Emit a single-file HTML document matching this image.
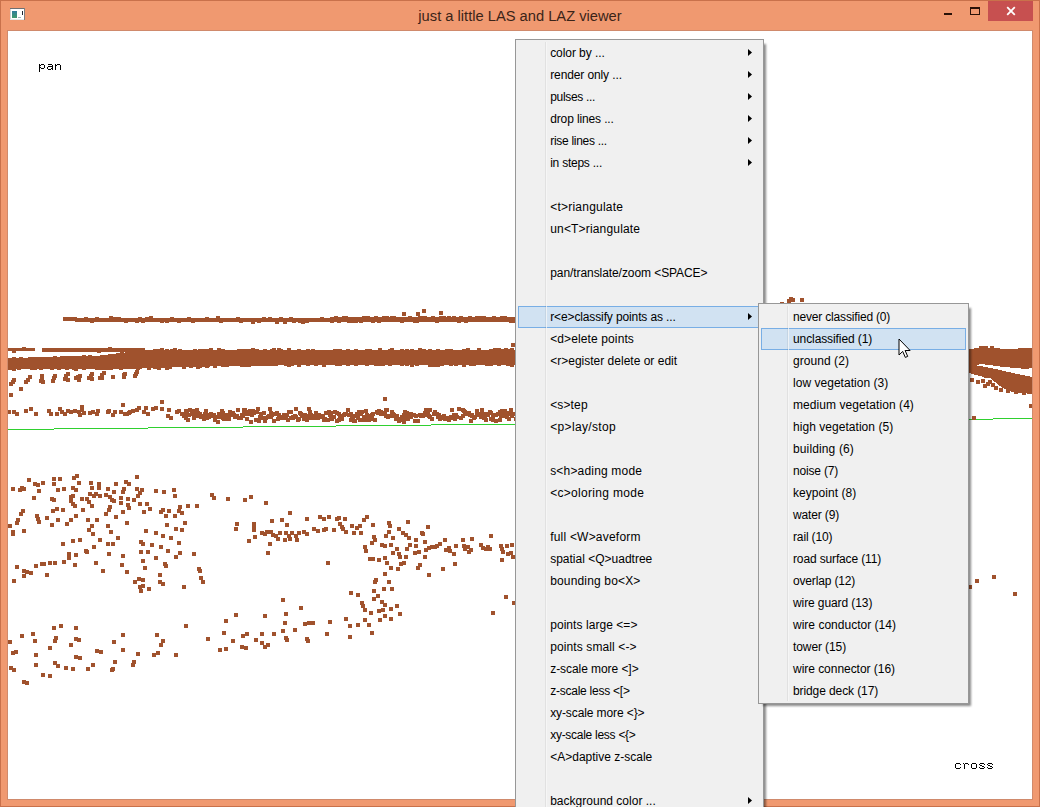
<!DOCTYPE html>
<html><head><meta charset="utf-8"><title>just a little LAS and LAZ viewer</title>
<style>
html,body{margin:0;padding:0;overflow:hidden}
body{width:1040px;height:807px;overflow:hidden;position:relative;background:#F09970;font-family:"Liberation Sans",sans-serif;font-size:12px;color:#000}
.frame{position:absolute;left:0;top:0;width:1038px;height:805px;border:1px solid #C9714B}
.canvas{position:absolute;left:7px;top:30px;width:1024px;height:768px;background:#fff;overflow:hidden;border:1px solid #D08A6C}
.gl{position:absolute;left:0;top:0}
.title{position:absolute;left:0;top:6px;width:1040px;text-align:center;font-size:14.7px;line-height:20px;color:#3b2418}
.icon{position:absolute;left:10px;top:8px;width:15px;height:12px}
.btn{position:absolute}
.close{position:absolute;left:988px;top:1px;width:45px;height:20px;background:#C75050}
.menu{position:absolute;background:#F0F0F0;border:1px solid #979797;box-sizing:border-box}
.menu .gut{position:absolute;top:2px;bottom:2px;width:1px;background:rgba(0,0,0,.058);border-right:1px solid rgba(255,255,255,.7);z-index:1}
.it{position:relative;height:22px;line-height:22px;white-space:pre}
.it span{position:absolute;top:0}
#m1{left:515px;top:39px;width:249px;height:790px;padding:2px 0}
#m1 .gut{left:29px}
#m1 .it span{left:34.2px}
#m1 .hl::before{content:"";position:absolute;left:2px;right:3px;top:0;height:20px;background:#D1E2F2;border:1px solid #78AEE5}
#m2{left:758px;top:303px;width:211px;height:401px;padding:2px 0}
#m2 .gut{left:28px}
#m2 .it span{left:34px}
#m2 .hl::before{content:"";position:absolute;left:2px;right:2px;top:0;height:20px;background:#D1E2F2;border:1px solid #78AEE5}
.ar{position:absolute;left:232px;top:7px;width:4px;height:7px;background:#000;clip-path:polygon(0 0,100% 50%,0 100%)}
.sh{position:absolute;background:rgba(0,0,0,.46);filter:blur(.8px)}
.cur{position:absolute;left:897.5px;top:337.5px}
</style></head><body>
<div class="frame"></div>
<div class="canvas"></div>
<div style="position:absolute;left:8px;top:31px;width:1024px;height:768px;overflow:hidden"><svg class="gl" width="1024" height="768" viewBox="8 31 1024 768" shape-rendering="crispEdges">
<line x1="8" y1="429.5" x2="1032" y2="418.6" stroke="#2fd02f" stroke-width="1"/>
<g fill="#A0522D">
<rect x="75" y="318" width="255" height="4"/>
<rect x="330" y="317" width="186" height="5"/>
<rect x="63" y="317" width="14" height="4"/>
<rect x="8" y="348" width="27" height="3"/>
<rect x="42" y="348" width="103" height="4"/>
<polygon points="8.0,358.0 12.0,357.9 16.0,357.8 20.0,357.7 24.0,357.6 28.0,357.5 32.0,357.3 36.0,357.2 40.0,357.1 44.0,357.0 48.0,356.9 52.0,356.8 56.0,356.7 60.0,356.6 64.0,356.5 68.0,356.4 72.0,356.3 76.0,356.2 80.0,356.0 84.0,355.9 88.0,355.8 92.0,355.7 96.0,355.6 100.0,355.5 104.0,355.0 108.0,354.5 112.0,354.0 116.0,353.5 120.0,353.1 124.0,352.6 128.0,352.1 132.0,351.6 136.0,351.1 140.0,350.6 144.0,350.1 148.0,350.0 152.0,350.0 156.0,350.0 160.0,350.0 164.0,350.0 168.0,350.0 172.0,350.0 176.0,350.0 180.0,350.0 184.0,350.0 188.0,350.0 192.0,350.0 196.0,350.0 200.0,350.0 204.0,350.0 208.0,350.0 212.0,350.0 216.0,350.0 220.0,350.0 224.0,350.0 228.0,350.0 232.0,350.0 236.0,350.0 240.0,350.0 244.0,350.0 248.0,350.0 252.0,350.0 256.0,350.0 260.0,350.0 264.0,350.0 268.0,350.0 272.0,350.0 276.0,350.0 280.0,350.0 284.0,350.0 288.0,350.0 292.0,350.0 296.0,350.0 300.0,350.0 304.0,350.0 308.0,350.0 312.0,350.0 316.0,350.0 320.0,350.0 324.0,350.0 328.0,350.0 332.0,350.0 336.0,350.0 340.0,350.0 344.0,350.0 348.0,350.0 352.0,350.0 356.0,350.0 360.0,350.0 364.0,350.0 368.0,350.0 372.0,350.0 376.0,350.0 380.0,350.0 384.0,350.0 388.0,350.0 392.0,350.0 396.0,350.0 400.0,350.0 404.0,350.0 408.0,350.0 412.0,350.0 416.0,350.0 420.0,350.0 424.0,350.0 428.0,350.0 432.0,350.0 436.0,350.0 440.0,350.0 444.0,350.0 448.0,350.0 452.0,350.0 456.0,350.0 460.0,350.0 464.0,350.0 468.0,350.0 472.0,350.0 476.0,350.0 480.0,350.0 484.0,350.0 488.0,350.0 492.0,350.0 496.0,350.0 500.0,350.0 504.0,350.0 508.0,350.0 512.0,350.0 516.0,350.0 516.0,364.5 512.0,365.0 508.0,365.0 504.0,365.0 500.0,365.0 496.0,365.0 492.0,365.0 488.0,365.1 484.0,365.1 480.0,365.1 476.0,365.1 472.0,365.1 468.0,365.1 464.0,365.1 460.0,365.1 456.0,365.1 452.0,365.1 448.0,365.1 444.0,365.1 440.0,365.1 436.0,365.1 432.0,365.2 428.0,365.2 424.0,365.2 420.0,365.2 416.0,365.2 412.0,365.2 408.0,365.2 404.0,365.2 400.0,365.2 396.0,365.2 392.0,365.2 388.0,365.2 384.0,365.2 380.0,365.3 376.0,365.3 372.0,365.3 368.0,365.3 364.0,365.3 360.0,365.3 356.0,365.3 352.0,365.3 348.0,365.3 344.0,365.3 340.0,365.3 336.0,365.3 332.0,365.3 328.0,365.4 324.0,365.4 320.0,365.4 316.0,365.4 312.0,365.4 308.0,365.4 304.0,365.4 300.0,365.4 296.0,365.4 292.0,365.4 288.0,365.4 284.0,365.4 280.0,365.4 276.0,365.5 272.0,365.5 268.0,365.5 264.0,365.5 260.0,365.5 256.0,365.5 252.0,365.5 248.0,365.6 244.0,365.6 240.0,365.8 236.0,365.9 232.0,365.9 228.0,366.1 224.0,366.1 220.0,366.2 216.0,366.4 212.0,366.4 208.0,366.6 204.0,366.6 200.0,366.8 196.0,366.9 192.0,366.9 188.0,367.1 184.0,367.2 180.0,367.3 176.0,367.4 172.0,367.5 168.0,367.6 164.0,367.7 160.0,367.9 156.0,368.0 152.0,368.1 148.0,368.2 144.0,368.3 140.0,368.4 136.0,368.5 132.0,368.7 128.0,368.8 124.0,368.9 120.0,369.0 116.0,369.0 112.0,369.0 108.0,369.1 104.0,369.1 100.0,369.1 96.0,369.1 92.0,369.1 88.0,369.1 84.0,369.2 80.0,369.2 76.0,369.2 72.0,369.2 68.0,369.2 64.0,369.2 60.0,369.3 56.0,369.3 52.0,369.3 48.0,369.3 44.0,369.3 40.0,369.4 36.0,369.4 32.0,369.4 28.0,369.4 24.0,369.4 20.0,369.4 16.0,369.5 12.0,369.5 8.0,369.5"/>
<polygon points="969.0,349.0 979.0,348.0 979.0,346.0 988.0,346.0 988.0,348.0 990.0,348.0 990.0,346.0 994.0,346.0 994.0,348.0 1005.0,349.0 1032.0,348.0 1032.0,368.0 1026.0,369.0 1015.0,368.0 1000.0,366.5 990.0,365.0 980.0,364.0 976.0,366.0 969.0,368.0"/>
<polygon points="969.0,366.0 980.0,366.0 990.0,368.0 1000.0,370.0 1015.0,373.5 1032.0,377.0 1032.0,394.0 1022.0,393.0 1012.0,392.0 1005.0,389.0 1000.0,386.0 995.0,382.0 990.0,378.0 985.0,378.0 981.0,376.0 975.0,375.0 969.0,373.0"/>
<path d="M7 410h4v4h-4zM8 358h4v4h-4zM8 366h4v4h-4zM8 524h4v4h-4zM8 640h4v4h-4zM9 382h4v4h-4zM9 393h4v4h-4zM9 666h4v4h-4zM11 380h4v4h-4zM11 487h4v4h-4zM11 530h4v4h-4zM11 532h4v4h-4zM11 651h4v4h-4zM12 349h4v4h-4zM12 357h4v4h-4zM12 367h4v4h-4zM12 378h4v4h-4zM12 410h4v4h-4zM12 579h4v4h-4zM12 668h4v4h-4zM14 650h4v4h-4zM15 412h4v4h-4zM15 521h4v4h-4zM15 565h4v4h-4zM16 518h4v4h-4zM17 366h4v4h-4zM18 488h4v4h-4zM19 357h4v4h-4zM19 387h4v4h-4zM19 512h4v4h-4zM20 486h4v4h-4zM20 634h4v4h-4zM21 509h4v4h-4zM22 347h4v4h-4zM22 358h4v4h-4zM22 487h4v4h-4zM22 529h4v4h-4zM22 569h4v4h-4zM22 574h4v4h-4zM22 680h4v4h-4zM24 380h4v4h-4zM24 409h4v4h-4zM25 570h4v4h-4zM25 681h4v4h-4zM26 378h4v4h-4zM27 478h4v4h-4zM28 375h4v4h-4zM29 407h4v4h-4zM29 571h4v4h-4zM30 357h4v4h-4zM30 366h4v4h-4zM31 632h4v4h-4zM32 496h4v4h-4zM33 366h4v4h-4zM33 482h4v4h-4zM33 639h4v4h-4zM34 412h4v4h-4zM34 564h4v4h-4zM34 653h4v4h-4zM34 663h4v4h-4zM35 357h4v4h-4zM35 514h4v4h-4zM36 483h4v4h-4zM36 517h4v4h-4zM37 489h4v4h-4zM37 520h4v4h-4zM39 357h4v4h-4zM39 366h4v4h-4zM39 379h4v4h-4zM40 374h4v4h-4zM40 376h4v4h-4zM40 379h4v4h-4zM40 562h4v4h-4zM41 380h4v4h-4zM41 481h4v4h-4zM41 673h4v4h-4zM42 562h4v4h-4zM43 357h4v4h-4zM45 516h4v4h-4zM45 573h4v4h-4zM47 409h4v4h-4zM48 357h4v4h-4zM48 561h4v4h-4zM48 646h4v4h-4zM48 674h4v4h-4zM49 412h4v4h-4zM50 348h4v4h-4zM50 357h4v4h-4zM50 366h4v4h-4zM50 497h4v4h-4zM50 523h4v4h-4zM51 379h4v4h-4zM51 509h4v4h-4zM52 376h4v4h-4zM52 477h4v4h-4zM52 482h4v4h-4zM52 498h4v4h-4zM52 626h4v4h-4zM53 356h4v4h-4zM53 374h4v4h-4zM53 561h4v4h-4zM53 639h4v4h-4zM53 661h4v4h-4zM54 636h4v4h-4zM55 412h4v4h-4zM55 507h4v4h-4zM56 488h4v4h-4zM56 518h4v4h-4zM56 664h4v4h-4zM57 366h4v4h-4zM58 407h4v4h-4zM58 477h4v4h-4zM59 624h4v4h-4zM60 356h4v4h-4zM60 410h4v4h-4zM61 348h4v4h-4zM61 508h4v4h-4zM61 542h4v4h-4zM62 487h4v4h-4zM62 560h4v4h-4zM63 377h4v4h-4zM63 412h4v4h-4zM64 374h4v4h-4zM64 377h4v4h-4zM64 666h4v4h-4zM65 356h4v4h-4zM65 366h4v4h-4zM65 522h4v4h-4zM66 372h4v4h-4zM66 378h4v4h-4zM66 409h4v4h-4zM67 552h4v4h-4zM67 556h4v4h-4zM69 410h4v4h-4zM69 495h4v4h-4zM69 499h4v4h-4zM69 518h4v4h-4zM69 643h4v4h-4zM70 348h4v4h-4zM71 486h4v4h-4zM71 494h4v4h-4zM71 502h4v4h-4zM71 539h4v4h-4zM71 667h4v4h-4zM72 366h4v4h-4zM72 476h4v4h-4zM73 409h4v4h-4zM73 504h4v4h-4zM73 563h4v4h-4zM74 356h4v4h-4zM74 367h4v4h-4zM74 376h4v4h-4zM74 488h4v4h-4zM74 514h4v4h-4zM74 553h4v4h-4zM74 626h4v4h-4zM74 637h4v4h-4zM74 655h4v4h-4zM75 474h4v4h-4zM76 375h4v4h-4zM77 376h4v4h-4zM77 378h4v4h-4zM77 410h4v4h-4zM77 481h4v4h-4zM77 638h4v4h-4zM78 356h4v4h-4zM78 374h4v4h-4zM78 413h4v4h-4zM78 538h4v4h-4zM78 656h4v4h-4zM80 405h4v4h-4zM80 408h4v4h-4zM80 497h4v4h-4zM81 508h4v4h-4zM82 355h4v4h-4zM82 366h4v4h-4zM82 411h4v4h-4zM84 317h4v4h-4zM84 348h4v4h-4zM84 549h4v4h-4zM85 356h4v4h-4zM85 497h4v4h-4zM85 550h4v4h-4zM86 518h4v4h-4zM86 667h4v4h-4zM87 376h4v4h-4zM87 500h4v4h-4zM87 528h4v4h-4zM88 355h4v4h-4zM88 376h4v4h-4zM88 411h4v4h-4zM88 492h4v4h-4zM89 374h4v4h-4zM89 481h4v4h-4zM90 319h4v4h-4zM90 372h4v4h-4zM90 377h4v4h-4zM90 486h4v4h-4zM90 504h4v4h-4zM90 524h4v4h-4zM91 356h4v4h-4zM91 410h4v4h-4zM91 532h4v4h-4zM91 663h4v4h-4zM92 494h4v4h-4zM92 545h4v4h-4zM94 492h4v4h-4zM94 561h4v4h-4zM95 317h4v4h-4zM95 356h4v4h-4zM95 366h4v4h-4zM95 412h4v4h-4zM95 518h4v4h-4zM95 649h4v4h-4zM96 409h4v4h-4zM97 349h4v4h-4zM97 482h4v4h-4zM97 486h4v4h-4zM98 366h4v4h-4zM98 376h4v4h-4zM98 494h4v4h-4zM98 538h4v4h-4zM99 376h4v4h-4zM99 650h4v4h-4zM100 373h4v4h-4zM100 376h4v4h-4zM101 355h4v4h-4zM101 366h4v4h-4zM101 569h4v4h-4zM102 371h4v4h-4zM104 493h4v4h-4zM104 512h4v4h-4zM105 366h4v4h-4zM106 410h4v4h-4zM106 487h4v4h-4zM106 524h4v4h-4zM106 542h4v4h-4zM107 409h4v4h-4zM107 508h4v4h-4zM107 552h4v4h-4zM108 347h4v4h-4zM108 495h4v4h-4zM108 505h4v4h-4zM109 316h4v4h-4zM109 354h4v4h-4zM109 366h4v4h-4zM109 530h4v4h-4zM110 498h4v4h-4zM110 668h4v4h-4zM111 375h4v4h-4zM111 413h4v4h-4zM111 542h4v4h-4zM111 667h4v4h-4zM112 490h4v4h-4zM112 499h4v4h-4zM112 640h4v4h-4zM113 317h4v4h-4zM113 410h4v4h-4zM113 660h4v4h-4zM114 354h4v4h-4zM114 482h4v4h-4zM114 515h4v4h-4zM116 536h4v4h-4zM117 317h4v4h-4zM119 366h4v4h-4zM119 410h4v4h-4zM119 496h4v4h-4zM119 501h4v4h-4zM120 349h4v4h-4zM120 563h4v4h-4zM121 403h4v4h-4zM121 490h4v4h-4zM121 510h4v4h-4zM121 554h4v4h-4zM121 633h4v4h-4zM121 648h4v4h-4zM122 373h4v4h-4zM122 375h4v4h-4zM122 487h4v4h-4zM123 353h4v4h-4zM123 372h4v4h-4zM123 412h4v4h-4zM124 319h4v4h-4zM124 480h4v4h-4zM125 412h4v4h-4zM125 521h4v4h-4zM125 570h4v4h-4zM126 497h4v4h-4zM126 503h4v4h-4zM127 351h4v4h-4zM127 411h4v4h-4zM127 482h4v4h-4zM127 506h4v4h-4zM128 410h4v4h-4zM131 409h4v4h-4zM131 663h4v4h-4zM132 352h4v4h-4zM132 498h4v4h-4zM132 660h4v4h-4zM133 374h4v4h-4zM133 580h4v4h-4zM134 372h4v4h-4zM135 319h4v4h-4zM135 370h4v4h-4zM135 408h4v4h-4zM135 475h4v4h-4zM135 487h4v4h-4zM136 351h4v4h-4zM136 366h4v4h-4zM136 494h4v4h-4zM136 652h4v4h-4zM137 406h4v4h-4zM137 577h4v4h-4zM138 317h4v4h-4zM138 365h4v4h-4zM138 491h4v4h-4zM138 502h4v4h-4zM138 585h4v4h-4zM139 540h4v4h-4zM139 550h4v4h-4zM139 589h4v4h-4zM140 350h4v4h-4zM140 488h4v4h-4zM141 319h4v4h-4zM141 542h4v4h-4zM141 559h4v4h-4zM141 578h4v4h-4zM141 584h4v4h-4zM142 410h4v4h-4zM142 510h4v4h-4zM143 566h4v4h-4zM144 406h4v4h-4zM144 529h4v4h-4zM145 317h4v4h-4zM145 502h4v4h-4zM146 412h4v4h-4zM146 550h4v4h-4zM147 366h4v4h-4zM147 587h4v4h-4zM148 507h4v4h-4zM149 316h4v4h-4zM150 543h4v4h-4zM151 407h4v4h-4zM152 653h4v4h-4zM153 349h4v4h-4zM153 365h4v4h-4zM154 406h4v4h-4zM154 489h4v4h-4zM154 531h4v4h-4zM154 556h4v4h-4zM155 633h4v4h-4zM156 651h4v4h-4zM157 349h4v4h-4zM157 366h4v4h-4zM158 573h4v4h-4zM158 580h4v4h-4zM159 510h4v4h-4zM159 545h4v4h-4zM159 643h4v4h-4zM160 319h4v4h-4zM160 348h4v4h-4zM160 400h4v4h-4zM160 407h4v4h-4zM161 508h4v4h-4zM161 534h4v4h-4zM161 582h4v4h-4zM161 639h4v4h-4zM162 490h4v4h-4zM163 562h4v4h-4zM164 514h4v4h-4zM164 564h4v4h-4zM165 319h4v4h-4zM165 349h4v4h-4zM165 366h4v4h-4zM165 523h4v4h-4zM166 414h4v4h-4zM166 549h4v4h-4zM167 408h4v4h-4zM167 509h4v4h-4zM168 365h4v4h-4zM169 416h4v4h-4zM169 536h4v4h-4zM170 317h4v4h-4zM170 349h4v4h-4zM172 488h4v4h-4zM173 348h4v4h-4zM173 494h4v4h-4zM173 514h4v4h-4zM174 527h4v4h-4zM174 555h4v4h-4zM174 653h4v4h-4zM175 410h4v4h-4zM177 319h4v4h-4zM177 409h4v4h-4zM177 509h4v4h-4zM177 541h4v4h-4zM178 349h4v4h-4zM178 505h4v4h-4zM178 551h4v4h-4zM180 412h4v4h-4zM180 511h4v4h-4zM180 528h4v4h-4zM182 365h4v4h-4zM182 414h4v4h-4zM182 585h4v4h-4zM183 413h4v4h-4zM183 521h4v4h-4zM184 409h4v4h-4zM184 416h4v4h-4zM184 624h4v4h-4zM185 411h4v4h-4zM186 418h4v4h-4zM186 504h4v4h-4zM187 317h4v4h-4zM187 413h4v4h-4zM188 408h4v4h-4zM189 364h4v4h-4zM190 412h4v4h-4zM191 319h4v4h-4zM191 409h4v4h-4zM192 416h4v4h-4zM192 552h4v4h-4zM193 349h4v4h-4zM193 412h4v4h-4zM193 414h4v4h-4zM195 408h4v4h-4zM195 504h4v4h-4zM196 365h4v4h-4zM196 411h4v4h-4zM196 413h4v4h-4zM197 414h4v4h-4zM197 567h4v4h-4zM198 349h4v4h-4zM198 364h4v4h-4zM198 412h4v4h-4zM198 569h4v4h-4zM199 415h4v4h-4zM199 576h4v4h-4zM201 349h4v4h-4zM201 414h4v4h-4zM201 580h4v4h-4zM202 417h4v4h-4zM203 412h4v4h-4zM204 409h4v4h-4zM205 317h4v4h-4zM205 349h4v4h-4zM205 364h4v4h-4zM205 416h4v4h-4zM206 413h4v4h-4zM206 637h4v4h-4zM207 415h4v4h-4zM208 414h4v4h-4zM209 348h4v4h-4zM209 412h4v4h-4zM210 414h4v4h-4zM210 493h4v4h-4zM212 413h4v4h-4zM212 496h4v4h-4zM213 364h4v4h-4zM213 418h4v4h-4zM214 415h4v4h-4zM215 415h4v4h-4zM216 316h4v4h-4zM216 420h4v4h-4zM217 348h4v4h-4zM217 412h4v4h-4zM218 415h4v4h-4zM218 648h4v4h-4zM219 319h4v4h-4zM219 413h4v4h-4zM220 409h4v4h-4zM221 349h4v4h-4zM221 363h4v4h-4zM221 411h4v4h-4zM221 416h4v4h-4zM222 417h4v4h-4zM222 631h4v4h-4zM223 413h4v4h-4zM224 417h4v4h-4zM224 619h4v4h-4zM224 647h4v4h-4zM225 363h4v4h-4zM225 417h4v4h-4zM226 413h4v4h-4zM226 497h4v4h-4zM227 417h4v4h-4zM228 410h4v4h-4zM229 411h4v4h-4zM230 413h4v4h-4zM231 411h4v4h-4zM231 639h4v4h-4zM232 413h4v4h-4zM233 414h4v4h-4zM233 415h4v4h-4zM234 527h4v4h-4zM234 613h4v4h-4zM235 414h4v4h-4zM235 522h4v4h-4zM236 317h4v4h-4zM236 408h4v4h-4zM237 349h4v4h-4zM237 416h4v4h-4zM239 319h4v4h-4zM239 416h4v4h-4zM240 349h4v4h-4zM240 363h4v4h-4zM240 413h4v4h-4zM240 645h4v4h-4zM241 414h4v4h-4zM241 634h4v4h-4zM242 408h4v4h-4zM242 410h4v4h-4zM243 408h4v4h-4zM243 498h4v4h-4zM244 349h4v4h-4zM244 363h4v4h-4zM244 410h4v4h-4zM244 646h4v4h-4zM245 412h4v4h-4zM245 417h4v4h-4zM245 632h4v4h-4zM246 410h4v4h-4zM247 349h4v4h-4zM247 363h4v4h-4zM247 412h4v4h-4zM247 539h4v4h-4zM248 409h4v4h-4zM249 420h4v4h-4zM249 495h4v4h-4zM250 413h4v4h-4zM251 320h4v4h-4zM251 348h4v4h-4zM251 362h4v4h-4zM251 409h4v4h-4zM252 411h4v4h-4zM252 522h4v4h-4zM252 526h4v4h-4zM252 528h4v4h-4zM253 410h4v4h-4zM253 535h4v4h-4zM254 418h4v4h-4zM254 638h4v4h-4zM255 349h4v4h-4zM255 362h4v4h-4zM255 410h4v4h-4zM256 407h4v4h-4zM257 319h4v4h-4zM257 419h4v4h-4zM258 415h4v4h-4zM259 412h4v4h-4zM260 416h4v4h-4zM260 531h4v4h-4zM260 632h4v4h-4zM260 641h4v4h-4zM261 416h4v4h-4zM262 317h4v4h-4zM262 411h4v4h-4zM263 349h4v4h-4zM263 362h4v4h-4zM263 419h4v4h-4zM263 532h4v4h-4zM263 614h4v4h-4zM263 645h4v4h-4zM264 416h4v4h-4zM264 501h4v4h-4zM265 530h4v4h-4zM266 415h4v4h-4zM266 551h4v4h-4zM266 643h4v4h-4zM267 414h4v4h-4zM268 317h4v4h-4zM268 407h4v4h-4zM268 542h4v4h-4zM269 411h4v4h-4zM269 415h4v4h-4zM269 530h4v4h-4zM270 349h4v4h-4zM270 413h4v4h-4zM270 519h4v4h-4zM271 533h4v4h-4zM272 348h4v4h-4zM272 362h4v4h-4zM272 419h4v4h-4zM272 632h4v4h-4zM273 412h4v4h-4zM274 362h4v4h-4zM274 534h4v4h-4zM275 320h4v4h-4zM275 411h4v4h-4zM276 417h4v4h-4zM276 537h4v4h-4zM277 348h4v4h-4zM277 413h4v4h-4zM278 531h4v4h-4zM279 317h4v4h-4zM279 349h4v4h-4zM279 416h4v4h-4zM280 415h4v4h-4zM280 416h4v4h-4zM280 518h4v4h-4zM281 598h4v4h-4zM281 629h4v4h-4zM282 413h4v4h-4zM283 320h4v4h-4zM283 416h4v4h-4zM283 538h4v4h-4zM283 621h4v4h-4zM284 362h4v4h-4zM284 416h4v4h-4zM284 531h4v4h-4zM284 612h4v4h-4zM284 636h4v4h-4zM285 413h4v4h-4zM285 523h4v4h-4zM285 638h4v4h-4zM286 418h4v4h-4zM287 348h4v4h-4zM287 363h4v4h-4zM287 410h4v4h-4zM287 534h4v4h-4zM288 511h4v4h-4zM288 537h4v4h-4zM289 317h4v4h-4zM289 410h4v4h-4zM289 416h4v4h-4zM290 362h4v4h-4zM290 531h4v4h-4zM291 415h4v4h-4zM291 416h4v4h-4zM292 319h4v4h-4zM293 414h4v4h-4zM293 628h4v4h-4zM294 407h4v4h-4zM294 415h4v4h-4zM294 534h4v4h-4zM295 538h4v4h-4zM296 418h4v4h-4zM297 349h4v4h-4zM297 363h4v4h-4zM297 417h4v4h-4zM297 531h4v4h-4zM298 319h4v4h-4zM298 411h4v4h-4zM299 412h4v4h-4zM299 606h4v4h-4zM300 414h4v4h-4zM301 320h4v4h-4zM301 413h4v4h-4zM302 417h4v4h-4zM302 530h4v4h-4zM303 413h4v4h-4zM303 417h4v4h-4zM303 622h4v4h-4zM305 319h4v4h-4zM305 418h4v4h-4zM305 517h4v4h-4zM305 532h4v4h-4zM305 637h4v4h-4zM306 349h4v4h-4zM306 362h4v4h-4zM306 414h4v4h-4zM306 639h4v4h-4zM307 407h4v4h-4zM307 621h4v4h-4zM308 410h4v4h-4zM309 413h4v4h-4zM309 416h4v4h-4zM310 414h4v4h-4zM311 349h4v4h-4zM311 414h4v4h-4zM311 621h4v4h-4zM312 416h4v4h-4zM312 527h4v4h-4zM313 414h4v4h-4zM314 362h4v4h-4zM314 411h4v4h-4zM315 414h4v4h-4zM316 416h4v4h-4zM316 529h4v4h-4zM317 413h4v4h-4zM318 515h4v4h-4zM319 414h4v4h-4zM320 317h4v4h-4zM320 415h4v4h-4zM321 414h4v4h-4zM322 363h4v4h-4zM322 418h4v4h-4zM322 517h4v4h-4zM322 528h4v4h-4zM323 417h4v4h-4zM324 411h4v4h-4zM324 527h4v4h-4zM325 632h4v4h-4zM326 418h4v4h-4zM326 561h4v4h-4zM327 410h4v4h-4zM327 515h4v4h-4zM328 413h4v4h-4zM328 620h4v4h-4zM329 411h4v4h-4zM329 415h4v4h-4zM330 319h4v4h-4zM330 417h4v4h-4zM332 415h4v4h-4zM332 528h4v4h-4zM333 349h4v4h-4zM333 410h4v4h-4zM334 316h4v4h-4zM335 349h4v4h-4zM335 362h4v4h-4zM335 411h4v4h-4zM335 419h4v4h-4zM335 517h4v4h-4zM337 319h4v4h-4zM337 412h4v4h-4zM337 418h4v4h-4zM337 516h4v4h-4zM338 349h4v4h-4zM338 362h4v4h-4zM338 414h4v4h-4zM338 522h4v4h-4zM339 414h4v4h-4zM340 417h4v4h-4zM340 525h4v4h-4zM341 527h4v4h-4zM342 316h4v4h-4zM342 413h4v4h-4zM343 412h4v4h-4zM343 517h4v4h-4zM344 316h4v4h-4zM344 412h4v4h-4zM344 530h4v4h-4zM344 617h4v4h-4zM346 349h4v4h-4zM346 362h4v4h-4zM346 408h4v4h-4zM347 319h4v4h-4zM347 413h4v4h-4zM348 624h4v4h-4zM348 635h4v4h-4zM349 412h4v4h-4zM349 418h4v4h-4zM349 591h4v4h-4zM350 319h4v4h-4zM350 414h4v4h-4zM350 524h4v4h-4zM351 416h4v4h-4zM352 419h4v4h-4zM352 531h4v4h-4zM353 414h4v4h-4zM353 419h4v4h-4zM354 319h4v4h-4zM354 349h4v4h-4zM354 362h4v4h-4zM355 412h4v4h-4zM355 526h4v4h-4zM356 413h4v4h-4zM356 416h4v4h-4zM356 593h4v4h-4zM356 623h4v4h-4zM357 410h4v4h-4zM358 411h4v4h-4zM358 418h4v4h-4zM358 524h4v4h-4zM359 319h4v4h-4zM359 412h4v4h-4zM359 531h4v4h-4zM360 410h4v4h-4zM360 601h4v4h-4zM361 418h4v4h-4zM361 604h4v4h-4zM362 316h4v4h-4zM362 415h4v4h-4zM362 518h4v4h-4zM363 418h4v4h-4zM363 545h4v4h-4zM363 608h4v4h-4zM363 618h4v4h-4zM364 409h4v4h-4zM364 549h4v4h-4zM365 349h4v4h-4zM365 362h4v4h-4zM365 413h4v4h-4zM365 416h4v4h-4zM365 515h4v4h-4zM366 316h4v4h-4zM367 414h4v4h-4zM367 418h4v4h-4zM367 623h4v4h-4zM368 349h4v4h-4zM368 416h4v4h-4zM368 557h4v4h-4zM369 417h4v4h-4zM369 611h4v4h-4zM370 413h4v4h-4zM370 417h4v4h-4zM370 541h4v4h-4zM370 631h4v4h-4zM371 319h4v4h-4zM371 412h4v4h-4zM371 523h4v4h-4zM371 557h4v4h-4zM372 535h4v4h-4zM372 589h4v4h-4zM372 597h4v4h-4zM373 418h4v4h-4zM373 538h4v4h-4zM373 580h4v4h-4zM374 316h4v4h-4zM374 362h4v4h-4zM374 578h4v4h-4zM375 410h4v4h-4zM376 411h4v4h-4zM376 594h4v4h-4zM377 319h4v4h-4zM377 409h4v4h-4zM377 411h4v4h-4zM377 558h4v4h-4zM377 609h4v4h-4zM378 348h4v4h-4zM378 362h4v4h-4zM378 411h4v4h-4zM378 618h4v4h-4zM379 410h4v4h-4zM379 412h4v4h-4zM380 543h4v4h-4zM380 600h4v4h-4zM381 362h4v4h-4zM381 412h4v4h-4zM381 608h4v4h-4zM382 316h4v4h-4zM382 587h4v4h-4zM383 397h4v4h-4zM383 411h4v4h-4zM383 544h4v4h-4zM383 556h4v4h-4zM383 572h4v4h-4zM383 603h4v4h-4zM383 614h4v4h-4zM384 408h4v4h-4zM384 414h4v4h-4zM384 534h4v4h-4zM385 316h4v4h-4zM385 408h4v4h-4zM385 561h4v4h-4zM386 415h4v4h-4zM387 414h4v4h-4zM387 521h4v4h-4zM387 530h4v4h-4zM387 580h4v4h-4zM388 349h4v4h-4zM388 362h4v4h-4zM388 524h4v4h-4zM389 414h4v4h-4zM389 543h4v4h-4zM389 566h4v4h-4zM389 607h4v4h-4zM389 617h4v4h-4zM390 316h4v4h-4zM390 348h4v4h-4zM390 410h4v4h-4zM390 587h4v4h-4zM391 412h4v4h-4zM391 536h4v4h-4zM391 551h4v4h-4zM392 316h4v4h-4zM392 413h4v4h-4zM393 414h4v4h-4zM394 417h4v4h-4zM395 414h4v4h-4zM395 415h4v4h-4zM395 547h4v4h-4zM395 604h4v4h-4zM396 567h4v4h-4zM397 419h4v4h-4zM397 527h4v4h-4zM397 552h4v4h-4zM398 417h4v4h-4zM398 555h4v4h-4zM398 612h4v4h-4zM399 417h4v4h-4zM399 562h4v4h-4zM400 319h4v4h-4zM400 349h4v4h-4zM400 362h4v4h-4zM400 415h4v4h-4zM400 418h4v4h-4zM401 531h4v4h-4zM402 312h4v4h-4zM402 413h4v4h-4zM402 420h4v4h-4zM402 561h4v4h-4zM403 410h4v4h-4zM404 416h4v4h-4zM404 533h4v4h-4zM404 555h4v4h-4zM405 349h4v4h-4zM405 362h4v4h-4zM405 411h4v4h-4zM405 412h4v4h-4zM405 547h4v4h-4zM406 417h4v4h-4zM406 520h4v4h-4zM407 413h4v4h-4zM407 415h4v4h-4zM407 536h4v4h-4zM408 316h4v4h-4zM408 543h4v4h-4zM409 412h4v4h-4zM409 415h4v4h-4zM410 349h4v4h-4zM410 363h4v4h-4zM411 413h4v4h-4zM412 413h4v4h-4zM413 319h4v4h-4zM413 419h4v4h-4zM413 551h4v4h-4zM414 414h4v4h-4zM414 538h4v4h-4zM414 544h4v4h-4zM415 319h4v4h-4zM415 362h4v4h-4zM416 312h4v4h-4zM416 419h4v4h-4zM416 566h4v4h-4zM417 550h4v4h-4zM418 316h4v4h-4zM418 348h4v4h-4zM418 413h4v4h-4zM418 563h4v4h-4zM419 413h4v4h-4zM419 414h4v4h-4zM420 414h4v4h-4zM420 531h4v4h-4zM421 316h4v4h-4zM421 413h4v4h-4zM421 414h4v4h-4zM421 532h4v4h-4zM422 309h4v4h-4zM422 349h4v4h-4zM423 316h4v4h-4zM423 411h4v4h-4zM423 412h4v4h-4zM423 413h4v4h-4zM423 540h4v4h-4zM423 555h4v4h-4zM424 408h4v4h-4zM424 548h4v4h-4zM425 411h4v4h-4zM426 410h4v4h-4zM426 525h4v4h-4zM427 414h4v4h-4zM427 546h4v4h-4zM427 573h4v4h-4zM428 349h4v4h-4zM428 363h4v4h-4zM428 408h4v4h-4zM428 415h4v4h-4zM430 417h4v4h-4zM430 545h4v4h-4zM431 316h4v4h-4zM432 363h4v4h-4zM432 412h4v4h-4zM433 410h4v4h-4zM433 545h4v4h-4zM435 319h4v4h-4zM435 412h4v4h-4zM435 544h4v4h-4zM436 349h4v4h-4zM436 363h4v4h-4zM436 415h4v4h-4zM437 413h4v4h-4zM438 415h4v4h-4zM438 417h4v4h-4zM438 542h4v4h-4zM439 311h4v4h-4zM439 316h4v4h-4zM440 362h4v4h-4zM441 416h4v4h-4zM441 567h4v4h-4zM442 316h4v4h-4zM442 414h4v4h-4zM443 417h4v4h-4zM443 538h4v4h-4zM444 548h4v4h-4zM445 349h4v4h-4zM445 416h4v4h-4zM447 316h4v4h-4zM447 417h4v4h-4zM447 418h4v4h-4zM447 546h4v4h-4zM448 549h4v4h-4zM449 349h4v4h-4zM449 362h4v4h-4zM449 415h4v4h-4zM449 416h4v4h-4zM450 408h4v4h-4zM451 415h4v4h-4zM452 316h4v4h-4zM452 413h4v4h-4zM452 552h4v4h-4zM453 417h4v4h-4zM453 562h4v4h-4zM454 362h4v4h-4zM454 413h4v4h-4zM454 415h4v4h-4zM454 544h4v4h-4zM455 415h4v4h-4zM457 319h4v4h-4zM457 407h4v4h-4zM459 316h4v4h-4zM459 416h4v4h-4zM461 408h4v4h-4zM461 414h4v4h-4zM461 538h4v4h-4zM462 349h4v4h-4zM462 363h4v4h-4zM462 409h4v4h-4zM462 544h4v4h-4zM463 410h4v4h-4zM463 547h4v4h-4zM464 319h4v4h-4zM464 412h4v4h-4zM465 411h4v4h-4zM466 348h4v4h-4zM466 412h4v4h-4zM466 545h4v4h-4zM467 411h4v4h-4zM467 550h4v4h-4zM468 316h4v4h-4zM468 413h4v4h-4zM469 362h4v4h-4zM469 419h4v4h-4zM469 548h4v4h-4zM470 413h4v4h-4zM470 414h4v4h-4zM470 537h4v4h-4zM472 362h4v4h-4zM472 415h4v4h-4zM472 416h4v4h-4zM473 415h4v4h-4zM475 316h4v4h-4zM475 409h4v4h-4zM475 411h4v4h-4zM477 348h4v4h-4zM477 412h4v4h-4zM477 413h4v4h-4zM478 412h4v4h-4zM479 316h4v4h-4zM479 415h4v4h-4zM479 543h4v4h-4zM480 408h4v4h-4zM481 546h4v4h-4zM482 316h4v4h-4zM482 412h4v4h-4zM482 416h4v4h-4zM483 415h4v4h-4zM484 412h4v4h-4zM484 418h4v4h-4zM484 547h4v4h-4zM485 362h4v4h-4zM486 413h4v4h-4zM486 545h4v4h-4zM488 410h4v4h-4zM488 547h4v4h-4zM489 349h4v4h-4zM489 362h4v4h-4zM489 411h4v4h-4zM489 417h4v4h-4zM489 534h4v4h-4zM491 415h4v4h-4zM491 418h4v4h-4zM491 611h4v4h-4zM492 316h4v4h-4zM493 348h4v4h-4zM493 413h4v4h-4zM494 413h4v4h-4zM494 419h4v4h-4zM496 412h4v4h-4zM497 348h4v4h-4zM497 362h4v4h-4zM498 410h4v4h-4zM498 418h4v4h-4zM499 414h4v4h-4zM499 544h4v4h-4zM500 316h4v4h-4zM500 409h4v4h-4zM500 414h4v4h-4zM500 547h4v4h-4zM500 558h4v4h-4zM501 349h4v4h-4zM501 410h4v4h-4zM501 550h4v4h-4zM503 316h4v4h-4zM503 409h4v4h-4zM503 414h4v4h-4zM504 348h4v4h-4zM504 595h4v4h-4zM505 411h4v4h-4zM505 415h4v4h-4zM505 544h4v4h-4zM506 349h4v4h-4zM506 362h4v4h-4zM506 552h4v4h-4zM507 412h4v4h-4zM507 417h4v4h-4zM509 319h4v4h-4zM509 408h4v4h-4zM509 551h4v4h-4zM510 348h4v4h-4zM510 363h4v4h-4zM510 414h4v4h-4zM510 543h4v4h-4zM511 343h4v4h-4zM511 412h4v4h-4zM511 555h4v4h-4zM512 601h4v4h-4zM513 319h4v4h-4zM513 412h4v4h-4zM514 417h4v4h-4zM780 302h4v4h-4zM787 299h4v4h-4zM789 297h4v4h-4zM791 298h4v4h-4zM800 298h4v4h-4zM968 585h4v4h-4zM970 378h4v4h-4zM972 416h4v4h-4zM975 579h4v4h-4zM976 380h4v4h-4zM981 379h4v4h-4zM983 384h4v4h-4zM986 382h4v4h-4zM988 380h4v4h-4zM991 383h4v4h-4zM992 575h4v4h-4zM994 386h4v4h-4zM999 388h4v4h-4zM1006 389h4v4h-4zM1013 592h4v4h-4zM1014 390h4v4h-4zM1022 391h4v4h-4zM1029 404h4v4h-4z"/>
</g>
<path fill="#000" d="M39 64h1v1h-1zM41 64h3v1h-3zM39 65h2v1h-2zM44 65h1v1h-1zM39 66h1v1h-1zM44 66h1v1h-1zM39 67h2v1h-2zM44 67h1v1h-1zM39 68h1v1h-1zM41 68h3v1h-3zM39 69h1v1h-1zM39 70h1v1h-1zM39 71h1v1h-1zM48 64h4v1h-4zM52 65h1v1h-1zM48 66h5v1h-5zM47 67h1v1h-1zM52 67h1v1h-1zM47 68h1v1h-1zM51 68h2v1h-2zM48 69h3v1h-3zM52 69h1v1h-1zM55 64h1v1h-1zM57 64h3v1h-3zM55 65h2v1h-2zM60 65h1v1h-1zM55 66h1v1h-1zM60 66h1v1h-1zM55 67h1v1h-1zM60 67h1v1h-1zM55 68h1v1h-1zM60 68h1v1h-1zM55 69h1v1h-1zM60 69h1v1h-1zM956 763h4v1h-4zM955 764h1v1h-1zM960 764h1v1h-1zM955 765h1v1h-1zM955 766h1v1h-1zM955 767h1v1h-1zM960 767h1v1h-1zM956 768h4v1h-4zM963 763h1v1h-1zM965 763h3v1h-3zM964 764h1v1h-1zM968 764h1v1h-1zM964 765h1v1h-1zM964 766h1v1h-1zM964 767h1v1h-1zM964 768h1v1h-1zM972 763h4v1h-4zM971 764h1v1h-1zM976 764h1v1h-1zM971 765h1v1h-1zM976 765h1v1h-1zM971 766h1v1h-1zM976 766h1v1h-1zM971 767h1v1h-1zM976 767h1v1h-1zM972 768h4v1h-4zM980 763h4v1h-4zM979 764h1v1h-1zM984 764h1v1h-1zM980 765h2v1h-2zM982 766h2v1h-2zM979 767h1v1h-1zM984 767h1v1h-1zM980 768h4v1h-4zM988 763h4v1h-4zM987 764h1v1h-1zM992 764h1v1h-1zM988 765h2v1h-2zM990 766h2v1h-2zM987 767h1v1h-1zM992 767h1v1h-1zM988 768h4v1h-4z"/>
</svg></div>
<svg class="icon" viewBox="0 0 15 12" shape-rendering="crispEdges"><defs><linearGradient id="ig" x1="0" y1="0" x2="0" y2="1"><stop offset="0" stop-color="#2f7d9c"/><stop offset="1" stop-color="#3f9b6c"/></linearGradient></defs><rect x="0" y="0" width="15" height="12" fill="#fff"/><rect x="0" y="0" width="15" height="1" fill="#6d6f72"/><rect x="14" y="0" width="1" height="12" fill="#7d7f82"/><rect x="0" y="1" width="1" height="11" fill="#cfd6d8"/><rect x="0" y="11" width="14" height="1" fill="#e4e8ea"/><rect x="2" y="3" width="5" height="7" fill="url(#ig)"/><rect x="12" y="3" width="1" height="4" fill="#1d2430"/><rect x="8" y="9" width="3" height="1" fill="#a3b1bd"/></svg>
<div class="title">just a little LAS and LAZ viewer</div>
<svg class="btn" style="left:940px;top:0" width="100" height="24" viewBox="940 0 100 24">
<rect x="988" y="1" width="45" height="20" fill="#C75050"/>
<rect x="944" y="13" width="8" height="2" fill="#2a1208"/>
<rect x="970.5" y="7.5" width="9" height="7" fill="none" stroke="#2a1208" stroke-width="1"/><rect x="970" y="7" width="10" height="2" fill="#2a1208"/>
<path d="M1007.2 7.2l7.6 7.6M1014.8 7.2l-7.6 7.6" stroke="#fff" stroke-width="1.8" fill="none"/>
</svg>
<div class="sh" style="left:520px;top:44px;width:246px;height:800px"></div>
<div class="menu" id="m1"><div class="gut"></div>
<div class="it"><span style="letter-spacing:-0.072px">color by ...</span><i class="ar"></i></div>
<div class="it"><span style="letter-spacing:-0.112px">render only ...</span><i class="ar"></i></div>
<div class="it"><span style="letter-spacing:-0.323px">pulses ...</span><i class="ar"></i></div>
<div class="it"><span style="letter-spacing:-0.127px">drop lines ...</span><i class="ar"></i></div>
<div class="it"><span style="letter-spacing:-0.292px">rise lines ...</span><i class="ar"></i></div>
<div class="it"><span style="letter-spacing:-0.242px">in steps ...</span><i class="ar"></i></div>
<div class="it"></div>
<div class="it"><span style="letter-spacing:0.226px">&lt;t&gt;riangulate</span></div>
<div class="it"><span style="letter-spacing:0.173px">un&lt;T&gt;riangulate</span></div>
<div class="it"></div>
<div class="it"><span style="letter-spacing:-0.073px">pan/translate/zoom &lt;SPACE&gt;</span></div>
<div class="it"></div>
<div class="it hl"><span style="letter-spacing:-0.124px">r&lt;e&gt;classify points as ...</span><i class="ar"></i></div>
<div class="it"><span style="letter-spacing:0.115px">&lt;d&gt;elete points</span></div>
<div class="it"><span style="letter-spacing:0.006px">&lt;r&gt;egister delete or edit</span></div>
<div class="it"></div>
<div class="it"><span style="letter-spacing:0.133px">&lt;s&gt;tep</span></div>
<div class="it"><span style="letter-spacing:0.341px">&lt;p&gt;lay/stop</span></div>
<div class="it"></div>
<div class="it"><span style="letter-spacing:0.178px">s&lt;h&gt;ading mode</span></div>
<div class="it"><span style="letter-spacing:0.307px">&lt;c&gt;oloring mode</span></div>
<div class="it"></div>
<div class="it"><span style="letter-spacing:0.208px">full &lt;W&gt;aveform</span></div>
<div class="it"><span style="letter-spacing:0.001px">spatial &lt;Q&gt;uadtree</span></div>
<div class="it"><span style="letter-spacing:0.158px">bounding bo&lt;X&gt;</span></div>
<div class="it"></div>
<div class="it"><span style="letter-spacing:0.056px">points large &lt;=&gt;</span></div>
<div class="it"><span style="letter-spacing:0.112px">points small &lt;-&gt;</span></div>
<div class="it"><span style="letter-spacing:-0.061px">z-scale more &lt;]&gt;</span></div>
<div class="it"><span style="letter-spacing:-0.242px">z-scale less &lt;[&gt;</span></div>
<div class="it"><span style="letter-spacing:-0.103px">xy-scale more &lt;}&gt;</span></div>
<div class="it"><span style="letter-spacing:-0.273px">xy-scale less &lt;{&gt;</span></div>
<div class="it"><span style="letter-spacing:0.002px">&lt;A&gt;daptive z-scale</span></div>
<div class="it"></div>
<div class="it"><span style="letter-spacing:0.010px">background color ...</span><i class="ar"></i></div>
</div>
<div class="sh" style="left:763px;top:308px;width:208px;height:398px"></div>
<div class="menu" id="m2"><div class="gut"></div>
<div class="it"><span style="letter-spacing:-0.176px">never classified (0)</span></div>
<div class="it hl"><span style="letter-spacing:-0.094px">unclassified (1)</span></div>
<div class="it"><span style="letter-spacing:0.058px">ground (2)</span></div>
<div class="it"><span style="letter-spacing:0.027px">low vegetation (3)</span></div>
<div class="it"><span style="letter-spacing:0.074px">medium vegetation (4)</span></div>
<div class="it"><span style="letter-spacing:0.042px">high vegetation (5)</span></div>
<div class="it"><span style="letter-spacing:0.131px">building (6)</span></div>
<div class="it"><span style="letter-spacing:-0.165px">noise (7)</span></div>
<div class="it"><span style="letter-spacing:0.050px">keypoint (8)</span></div>
<div class="it"><span style="letter-spacing:-0.138px">water (9)</span></div>
<div class="it"><span style="letter-spacing:-0.143px">rail (10)</span></div>
<div class="it"><span style="letter-spacing:-0.141px">road surface (11)</span></div>
<div class="it"><span style="letter-spacing:-0.161px">overlap (12)</span></div>
<div class="it"><span style="letter-spacing:-0.094px">wire guard (13)</span></div>
<div class="it"><span style="letter-spacing:0.010px">wire conductor (14)</span></div>
<div class="it"><span style="letter-spacing:-0.093px">tower (15)</span></div>
<div class="it"><span style="letter-spacing:-0.038px">wire connector (16)</span></div>
<div class="it"><span style="letter-spacing:-0.101px">bridge deck (17)</span></div>
</div>
<svg class="cur" width="14" height="21" viewBox="0 0 14 21"><path d="M1 1v16l3.7-3.6 2.6 6 2.4-1-2.6-5.9h5z" fill="#fff" stroke="#000" stroke-width="1" stroke-linejoin="miter"/></svg>
</body></html>
